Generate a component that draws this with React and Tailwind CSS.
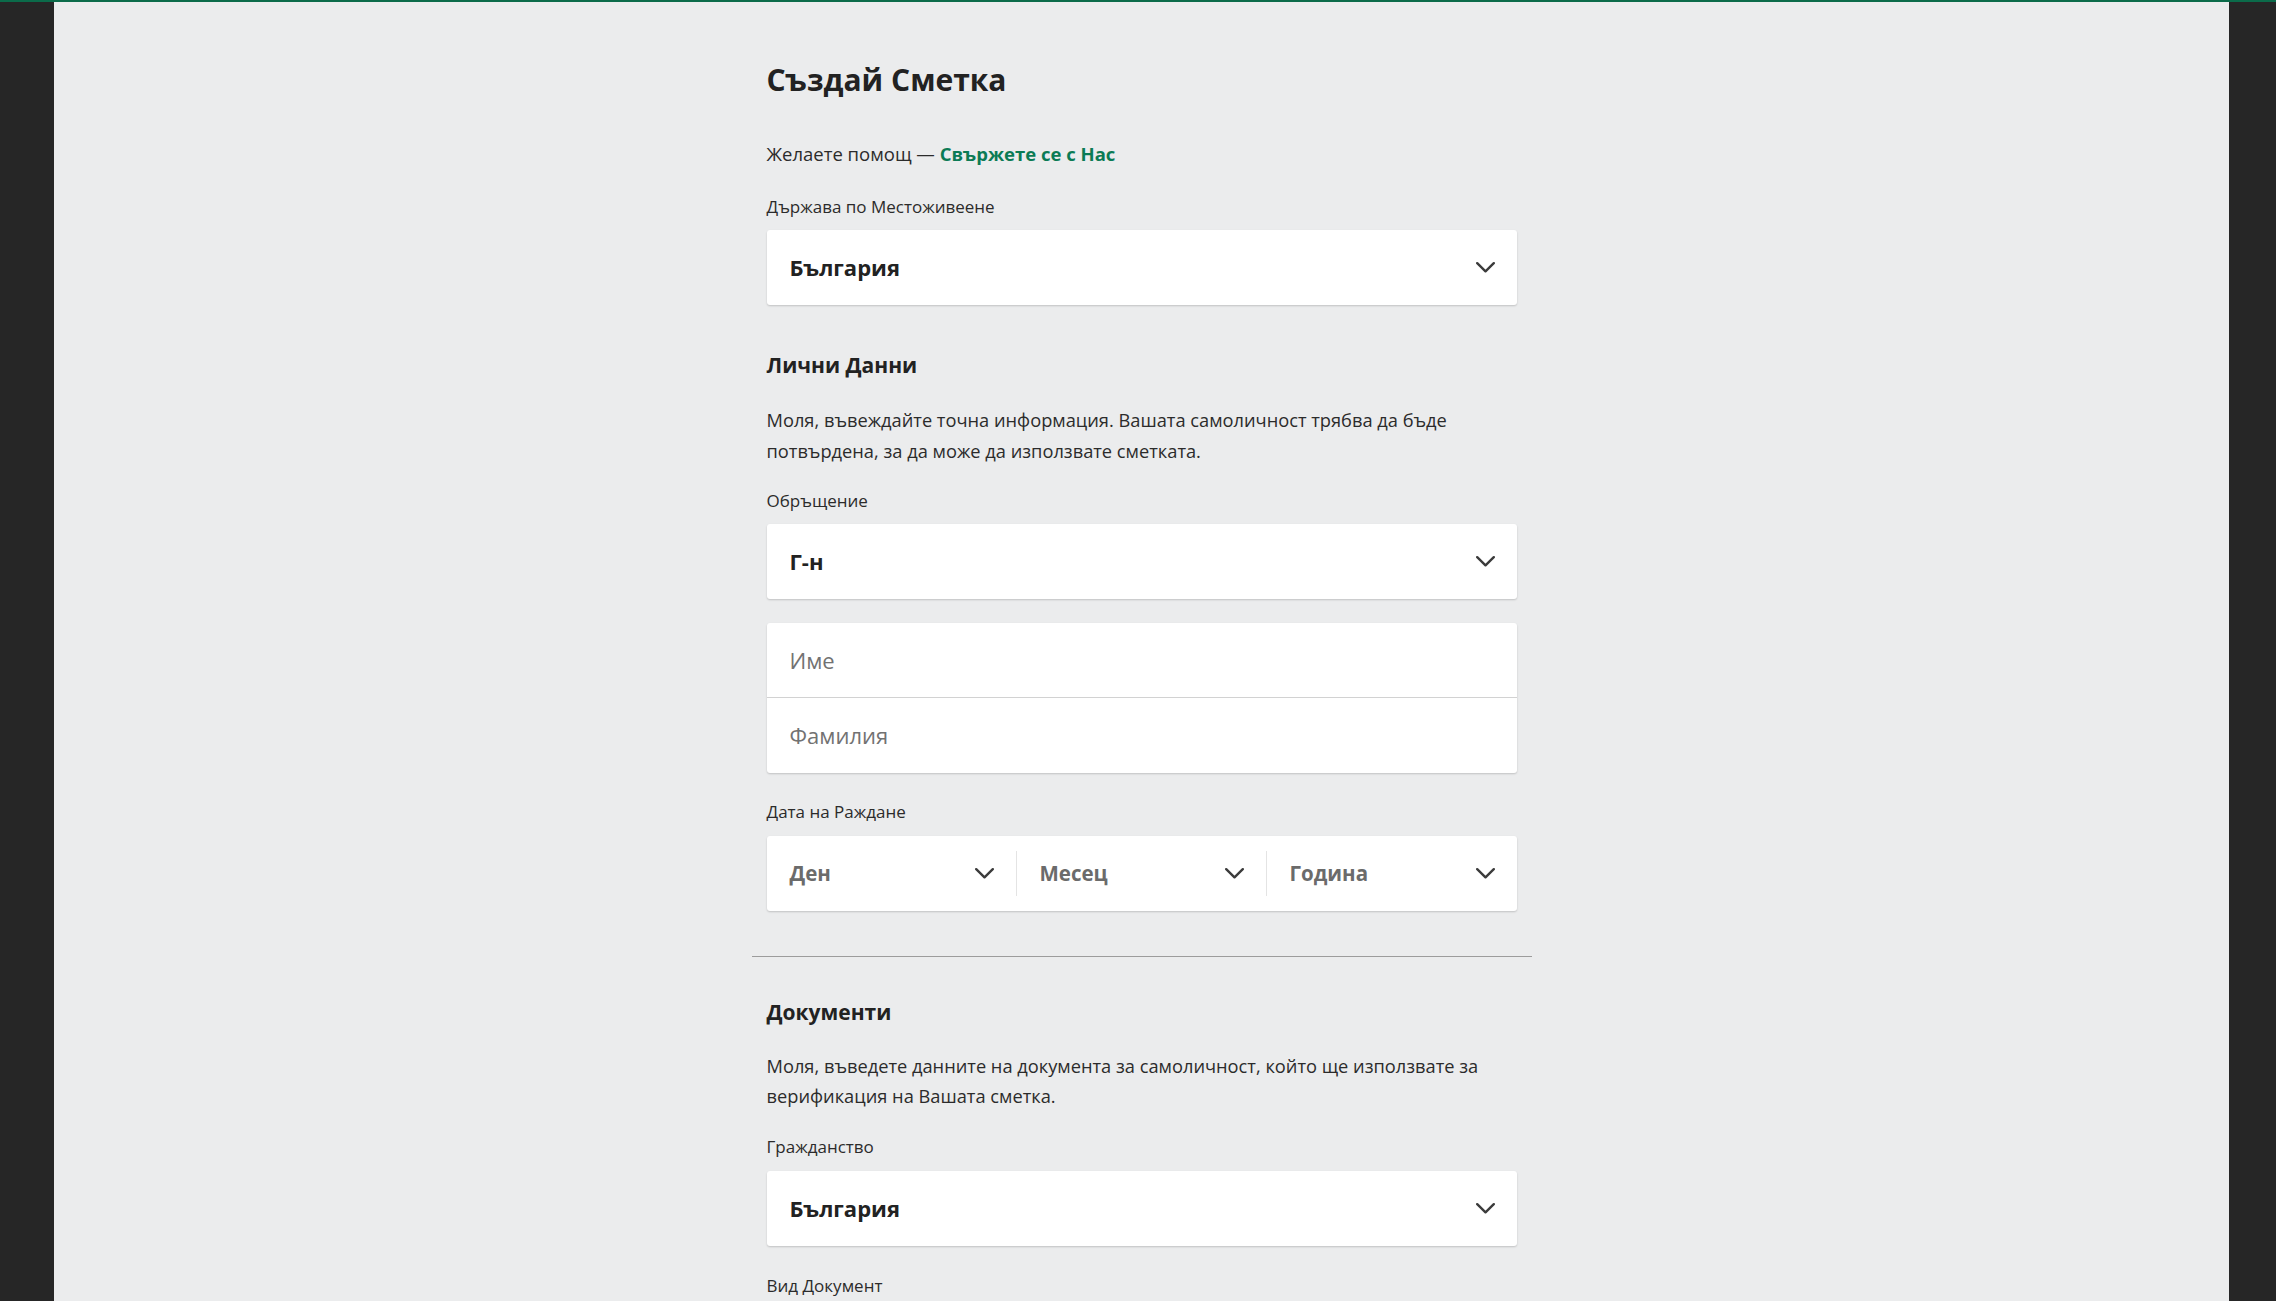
import React from "react";

const Chevron = () => (
  <svg width="19" height="11" viewBox="0 0 19 11" fill="none" className="shrink-0">
    <polyline points="1.2,1.2 9.5,9.3 17.8,1.2" stroke="#3b3b3b" strokeWidth="2.4" strokeLinecap="round" strokeLinejoin="round" />
  </svg>
);

const Label = ({ children, className = "" }) => (
  <div className={`text-[17px] leading-[22px] text-[#2b2b2b] ${className}`}>{children}</div>
);

const Select = ({ value, className = "" }) => (
  <div className={`flex h-[75px] items-center justify-between rounded-[3px] bg-white pl-[23px] pr-[22px] shadow-[0_1px_2px_rgba(0,0,0,0.18)] ${className}`}>
    <span className="text-[22px] font-bold text-[#222]">{value}</span>
    <Chevron />
  </div>
);

const DatePart = ({ value, last }) => (
  <div className="flex flex-1 items-center">
    <div className="flex flex-1 items-center justify-between pl-[23px] pr-[22px]">
      <span className="text-[20.5px] font-bold text-[#6b6b6b]">{value}</span>
      <Chevron />
    </div>
    {!last && <div className="h-[45px] w-px bg-[#e4e4e4]" />}
  </div>
);

export default function App() {
  return (
    <div className="min-h-screen bg-[#262626] font-['Open_Sans',sans-serif]">
      <div className="h-[2px] bg-[#0b6b4a]" />
      <div className="ml-[54px] mr-[47px] min-h-[1400px] bg-[#ebeced]">
        <div className="mx-auto w-[750px] pb-20 pt-[58px]">
          <h1 className="text-[30px] font-bold leading-[40px] text-[#222]">Създай Сметка</h1>

          <p className="mt-[42px] text-[18.5px] leading-[24px] text-[#2b2b2b]">
            Желаете помощ —{" "}
            <a className="font-bold text-[#0b7b55]" href="#">Свържете се с Нас</a>
          </p>

          <Label className="mt-[30px]">Държава по Местоживеене</Label>
          <Select value="България" className="mt-[12px]" />

          <h2 className="mt-[45px] text-[21px] font-bold leading-[30px] text-[#222]">Лични Данни</h2>
          <p className="mt-[24px] text-[18.25px] leading-[31px] text-[#2b2b2b]">
            Моля, въвеждайте точна информация. Вашата самоличност трябва да бъде потвърдена, за да може да използвате сметката.
          </p>

          <Label className="mt-[24px]">Обръщение</Label>
          <Select value="Г-н" className="mt-[12px]" />

          <div className="mt-[24px] rounded-[3px] bg-white shadow-[0_1px_2px_rgba(0,0,0,0.18)]">
            <div className="flex h-[75px] items-center border-b border-[#d2d2d2] pl-[23px] text-[22px] text-[#727272]">Име</div>
            <div className="flex h-[75px] items-center pl-[23px] text-[22px] text-[#727272]">Фамилия</div>
          </div>

          <Label className="mt-[28px]">Дата на Раждане</Label>
          <div className="mt-[13px] flex h-[75px] items-center rounded-[3px] bg-white shadow-[0_1px_2px_rgba(0,0,0,0.18)]">
            <DatePart value="Ден" />
            <DatePart value="Месец" />
            <DatePart value="Година" last />
          </div>

          <div className="-mx-[15px] mt-[45px] h-px bg-[#9c9c9c]" />

          <h2 className="mt-[40px] text-[21px] font-bold leading-[30px] text-[#222]">Документи</h2>
          <p className="mt-[24px] text-[18.25px] leading-[30px] text-[#2b2b2b]">
            Моля, въведете данните на документа за самоличност, който ще използвате за верификация на Вашата сметка.
          </p>

          <Label className="mt-[25px]">Гражданство</Label>
          <Select value="България" className="mt-[13px]" />

          <Label className="mt-[29px]">Вид Документ</Label>
          <Select value="Лична карта" className="mt-[12px]" />
        </div>
      </div>
    </div>
  );
}
